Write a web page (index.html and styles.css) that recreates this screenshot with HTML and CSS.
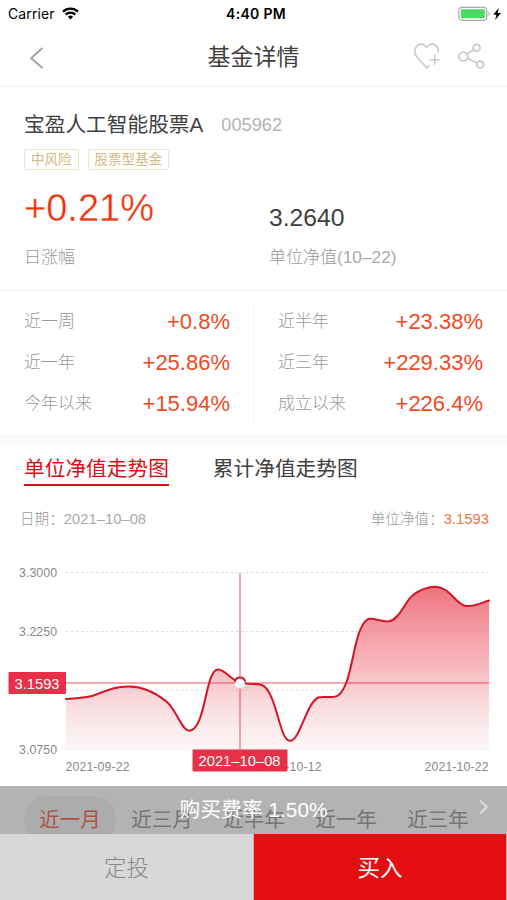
FILE: index.html
```html
<!DOCTYPE html>
<html lang="zh-CN">
<head>
<meta charset="utf-8">
<title>基金详情</title>
<link rel="stylesheet" href="styles.css">
</head>
<body>
<div class="screen">
  <header class="status">
    <div class="status-left"><span class="carrier">Carrier</span>
      <svg width="17" height="13" viewBox="0 0 17 13" fill="none" stroke="#000" stroke-width="2.4"><path d="M1 4.7a10.7 10.7 0 0 1 15 0M3.7 7.6a6.9 6.9 0 0 1 9.6 0"/><path d="M8.5 12.5 5.900 9.800a3.800 3.800 0 0 1 5.200 0z" fill="#000" stroke="none"/></svg>
    </div>
    <span class="time">4:40 PM</span>
    <svg class="battery" width="44" height="16" viewBox="0 0 44 16"><rect x=".8" y="1.3" width="28" height="13" rx="3.2" fill="#fff" stroke="#a9a9a9" stroke-width="1.2"/><rect x="2.8" y="3.3" width="24" height="9" rx="1.2" fill="#4cd964"/><path d="M30.500 6v4c1.800-.6 1.800-3.400 0-4z" fill="#a9a9a9"/><path d="M40.800 1.800 35.300 8.700h3L37.200 14 43 6.900h-3.300z" fill="#000"/></svg>
  </header>
  <nav class="nav">
    <svg class="back" width="16" height="24" viewBox="0 0 16 24" fill="none" stroke="#a0a0a0" stroke-width="1.800"><path d="M13.500 2 2 12.300l11.500 9.700"/></svg>
    <h1>基金详情</h1>
    <div class="actions">
      <svg width="28" height="28" viewBox="0 0 28 28" fill="none" stroke="#c8c8c8" stroke-width="1.600" stroke-linecap="round" stroke-linejoin="round"><path d="M13.800 26 4.200 15.200C.2 10.800 1.500 5.600 4.600 3.300 7.600 1.200 11 2 13.500 5.500 16 2 19.400 1.200 22.300 3.200c2.300 1.600 3.200 4 2.900 6.300M13.800 26l2-2.200M21.600 13v9.300M17.300 17.700h8.600"/></svg>
      <svg width="28" height="28" viewBox="0 0 28 28" fill="none" stroke="#c8c8c8" stroke-width="1.700"><circle cx="6.300" cy="14.500" r="4.500"/><circle cx="19.600" cy="5.800" r="3.400"/><circle cx="23.200" cy="22.600" r="3.400"/><path d="m10.100 11.900 6.600-4.200M10.500 16.300l9.500 4.800"/></svg>
    </div>
  </nav>
  <section class="fund">
    <div class="fund-name"><h2>宝盈人工智能股票A</h2><span class="code">005962</span></div>
    <div class="tags"><span>中风险</span><span>股票型基金</span></div>
    <div class="quote">
      <div><b class="change">+0.21%</b><span class="caption">日涨幅</span></div>
      <div><b class="price">3.2640</b><span class="caption">单位净值<i>(10–22)</i></span></div>
    </div>
  </section>
  <section class="returns">
    <dl><div><dt>近一周</dt><dd>+0.8%</dd></div><div><dt>近一年</dt><dd>+25.86%</dd></div><div><dt>今年以来</dt><dd>+15.94%</dd></div></dl>
    <dl><div><dt>近半年</dt><dd>+23.38%</dd></div><div><dt>近三年</dt><dd>+229.33%</dd></div><div><dt>成立以来</dt><dd>+226.4%</dd></div></dl>
  </section>
  <section class="trend">
    <div class="tabs"><span class="tab active">单位净值走势图</span><span class="tab">累计净值走势图</span></div>
    <div class="reading"><span>日期：<i>2021–10–08</i></span><span>单位净值：<em>3.1593</em></span></div>
    <svg class="chart" width="507" height="240" viewBox="0 545 507 240">
      <defs><linearGradient id="fill" gradientUnits="userSpaceOnUse" x1="0" y1="587" x2="0" y2="749"><stop offset="0" stop-color="#ee6672" stop-opacity=".92"/><stop offset=".5" stop-color="#f2929b" stop-opacity=".64"/><stop offset="1" stop-color="#f5dfe1" stop-opacity=".3"/></linearGradient></defs>
      <path class="grid" d="M66 572.500H489M66 631.500H489M66 690H489"/>
      <path fill="url(#fill)" d="M66 699C75 698.500 83 698 92 696C104 692 112 686.500 129 686.500C144 686.500 156 693 167 702C177 711 182 730.700 189 730.700C206 730.700 205 669.500 218 669.500C225 669.500 231 680 240 682.500C249 685 256 683 262 685C277 692 279 740.700 290 740.700C300 740.700 306 704 318 697.500C325 695.500 333 699 338 695.500C354 684 352 629 368 619C374 617.500 382 622.500 389 621.300C400 619 405 601 413 595C422 588 430 586.700 436 586.700C451 588 455 604 466 606C474 607 481 603 489 600.500V749H66Z"/>
      <path class="axis" d="M66 749.500H489"/>
      <path class="line" d="M66 699C75 698.500 83 698 92 696C104 692 112 686.500 129 686.500C144 686.500 156 693 167 702C177 711 182 730.700 189 730.700C206 730.700 205 669.500 218 669.500C225 669.500 231 680 240 682.500C249 685 256 683 262 685C277 692 279 740.700 290 740.700C300 740.700 306 704 318 697.500C325 695.500 333 699 338 695.500C354 684 352 629 368 619C374 617.500 382 622.500 389 621.300C400 619 405 601 413 595C422 588 430 586.700 436 586.700C451 588 455 604 466 606C474 607 481 603 489 600.500"/>
      <path class="cross" d="M66 683H489M240 573V749"/>
      <circle cx="240" cy="683.500" r="5" fill="#fff"/><path class="line" d="M235 681a5.300 5.300 0 0 1 10 0"/>
      <g class="ylabels"><text x="19" y="577" textLength="38">3.3000</text><text x="19" y="635.500" textLength="38">3.2250</text><text x="19" y="753.500" textLength="38">3.0750</text></g>
      <g class="xlabels"><text x="65.500" y="770.500" textLength="64">2021-09-22</text><text x="257.500" y="770.500" textLength="64">2021-10-12</text><text x="424.500" y="770.500" textLength="64">2021-10-22</text></g>
      <g class="badges"><rect x="8.500" y="672" width="57.500" height="22" rx="1"/><text x="14.500" y="688.500" textLength="45">3.1593</text><rect x="192.500" y="749.500" width="95" height="22" rx="1"/><text x="198.500" y="765.500" textLength="82">2021–10–08</text></g>
    </svg>
    <div class="periods"><span class="current">近一月</span><span>近三月</span><span>近半年</span><span>近一年</span><span>近三年</span></div>
  </section>
  <footer class="dock">
    <div class="fee"><span>购买费率 1.50%</span><svg width="10" height="16" viewBox="0 0 10 16" fill="none" stroke="#dcdcdc" stroke-width="1.800"><path d="m1 1.500 7 6.500-7 6.500"/></svg></div>
    <div class="buttons"><span class="invest">定投</span><span class="buy">买入</span></div>
  </footer>
</div>
</body>
</html>
```
FILE: styles.css
```css
* { box-sizing: border-box; }
body, h1, h2, dl, dd { margin: 0; }
body { background: #fff; font-family: "Liberation Sans", "Noto Sans CJK SC", sans-serif; color: #404040; }
i, em { font-style: normal; }
.screen { position: relative; width: 507px; height: 900px; overflow: hidden; }

.status { display: grid; grid-template-columns: 1fr auto 1fr; align-items: center; height: 27px; padding: 0 5px 0 8px; color: #000; font-family: Inter, sans-serif; }
.status-left { display: flex; align-items: center; gap: 7px; }
.carrier { font-size: 14px; letter-spacing: .1px; }
.time { margin-left: 2px; font-size: 14px; font-weight: 600; letter-spacing: .3px; }
.battery { justify-self: end; }

.nav { display: grid; grid-template-columns: 1fr auto 1fr; align-items: center; height: 60px; padding: 0 22px 0 29px; border-bottom: 1px solid #eee; }
.nav h1 { margin-left: -7px; font-size: 23px; line-height: 34px; font-weight: 400; }
.nav .back { margin-top: 3px; }
.actions { display: flex; justify-content: flex-end; gap: 16px; margin-top: -1px; }

.fund { height: 204px; padding: 20px 24px 0; border-bottom: 1px solid #f3f3f3; }
.fund-name { display: flex; align-items: center; height: 36px; gap: 18px; }
.fund-name h2 { font-size: 20.7px; line-height: 30px; font-weight: 400; white-space: nowrap; }
.code { font-size: 18.2px; color: #b2b2b2; }
.tags { display: flex; gap: 9px; margin-top: 6px; }
.tags span { height: 21px; padding: 0 6px; border: 1px solid #eee3cb; border-radius: 2px; font-size: 13.5px; line-height: 20px; color: #d3b886; }
.quote { display: grid; grid-template-columns: 245px 1fr; margin-top: 14px; }
.quote > div { display: flex; flex-direction: column; }
.quote b { display: flex; align-items: center; height: 48px; font-weight: 400; }
.quote .change { font-size: 38px; color: #f0350e; -webkit-text-stroke: .3px #fff; }
.quote .price { font-size: 24.7px; padding-top: 19px; }
.caption { margin-top: 13px; font-size: 17px; line-height: 25px; font-weight: 300; color: #999; }
.caption i { font-size: 17.3px; color: #aaa; }

.returns { display: grid; grid-template-columns: 254px 253px; height: 143px; }
.returns dl { height: 127px; margin-top: 8px; padding: 2px 24px 0; }
.returns dl:first-child { border-right: 1px solid #f5f5f5; }
.returns dl div { display: flex; justify-content: space-between; align-items: center; height: 41.3px; }
.returns dt { font-size: 17px; line-height: 24px; font-weight: 300; color: #999; }
.returns dd { font-size: 22px; color: #f0491f; }
.returns dl:first-child dd { margin-right: -1px; }

.trend { border-top: 11px solid #fafafa; }
.tabs { display: flex; gap: 44px; height: 44px; padding-left: 24px; }
.tab { height: 41px; font-size: 20.7px; line-height: 47px; }
.tab.active { color: #da0d16; border-bottom: 2px solid #da0d16; }
.reading { display: flex; justify-content: space-between; height: 56px; padding: 18px 18px 0 20px; font-size: 14.6px; line-height: 24px; font-weight: 300; color: #999; }
.reading i { font-size: 14.8px; color: #aaa; }
.reading em { font-size: 14.8px; font-weight: 400; color: #f17345; }
.chart { display: block; }
.grid { fill: none; stroke: #dedede; stroke-width: 1; stroke-dasharray: 2.5 2.5; }
.axis { stroke: #eee; }
.line { fill: none; stroke: #d41525; stroke-width: 2; stroke-linecap: round; }
.cross { fill: none; stroke: #e92439; stroke-opacity: .4; stroke-width: 2; }
.ylabels, .xlabels { font-size: 12.3px; fill: #888; }
.badges rect { fill: #e8203a; fill-opacity: .93; }
.badges text { font-size: 14.7px; fill: #fff; }
.periods { display: grid; grid-template-columns: repeat(5, 92px); padding-left: 24px; margin-top: 11px; font-size: 20.5px; line-height: 48px; color: #8c8c8c; }
.periods span { width: 92px; text-align: center; }
.periods .current { border-radius: 23px; background: #f3f3f3; color: #f34b43; }

.dock { position: absolute; left: 0; bottom: 0; width: 507px; }
.fee { display: grid; grid-template-columns: 1fr auto 1fr; align-items: center; height: 48px; padding: 0 18px; background: rgba(90, 90, 90, .46); color: #fff; font-size: 20.8px; }
.fee span { grid-column: 2; line-height: 48px; }
.fee svg { justify-self: end; margin-top: -6px; }
.buttons { display: grid; grid-template-columns: 253px 1fr; gap: 1px; height: 66px; padding-right: 1px; background: #ee9da1; font-size: 22.5px; font-weight: 300; line-height: 69px; text-align: center; }
.buttons span { height: 66px; }
.invest { background: #d8d8d8; color: #888; }
.buy { background: #e50d12; color: #fff; font-weight: 400; }
```
